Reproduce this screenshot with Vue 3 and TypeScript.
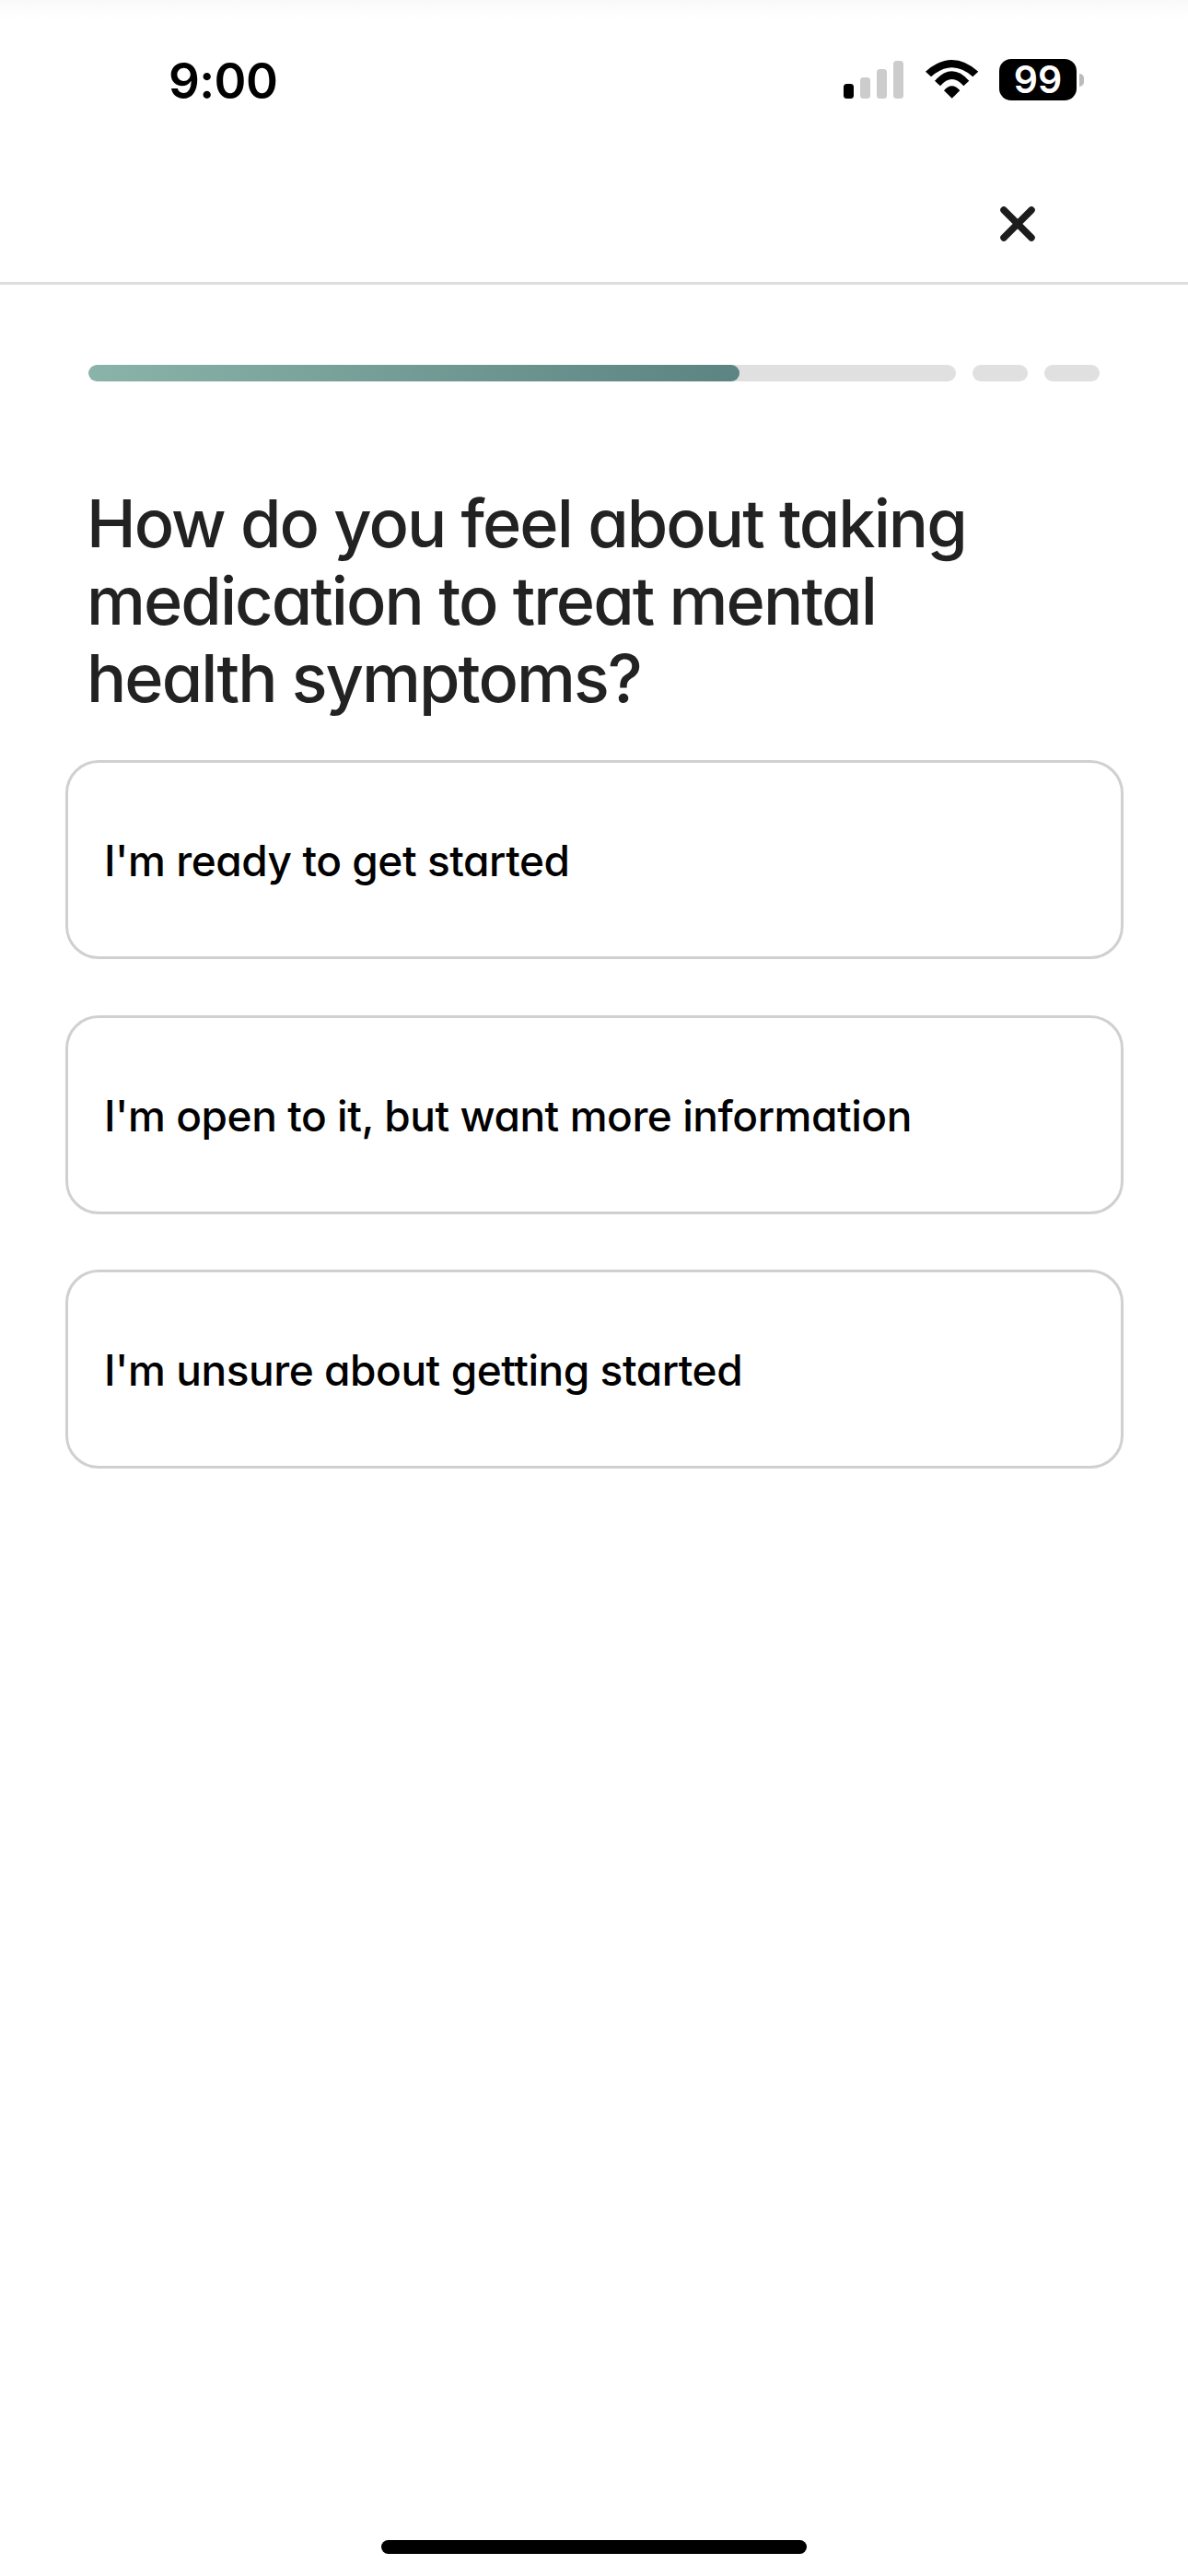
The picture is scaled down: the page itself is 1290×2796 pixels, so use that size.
<script setup lang="ts">
interface Option { id: number; label: string }
const options: Option[] = [
  { id: 1, label: "I'm ready to get started" },
  { id: 2, label: "I'm open to it, but want more information" },
  { id: 3, label: "I'm unsure about getting started" },
]
</script>

<template>
  <div class="screen">
    <div class="status">
      <span class="time">9:00</span>
      <div class="status-icons">
        <svg class="signal" width="66" height="42" viewBox="0 0 66 42">
          <rect x="0" y="25" width="11" height="16" rx="3.5" fill="#000" />
          <rect x="18" y="18" width="11" height="23" rx="3.5" fill="#ccc" />
          <rect x="36" y="9" width="11" height="32" rx="3.5" fill="#ccc" />
          <rect x="54" y="0" width="11" height="41" rx="3.5" fill="#ccc" />
        </svg>
        <svg class="wifi" width="58" height="42" viewBox="0 0 58 42">
          <path d="M0 12.7 Q28.7 -12.7 57.3 12.7 L51.3 18.3 Q28.7 -1.7 6 18.3 Z" fill="#000" />
          <path d="M10 22.7 Q28.7 1.9 47.3 22.7 L41.3 28.3 Q28.7 13.7 16 28.3 Z" fill="#000" />
          <path d="M20 33.3 Q28.7 23.3 37.3 33.3 L28.7 41.7 Z" fill="#000" />
        </svg>
        <div class="battery">
          <span class="battery-body">99</span>
          <span class="battery-cap"></span>
        </div>
      </div>
    </div>

    <header class="nav">
      <svg class="close" width="38" height="38" viewBox="0 0 38 38">
        <path d="M4 4 L34 34 M34 4 L4 34" stroke="#1c1c1c" stroke-width="7.5" stroke-linecap="round" />
      </svg>
    </header>

    <main class="content">
      <div class="progress">
        <div class="segment segment-main"><div class="fill"></div></div>
        <div class="segment segment-small"></div>
        <div class="segment segment-small"></div>
      </div>
      <h1 class="title">How do you feel about taking medication to treat mental health symptoms?</h1>
      <div class="options">
        <button v-for="o in options" :key="o.id" class="option" type="button">{{ o.label }}</button>
      </div>
    </main>

    <div class="home-indicator"></div>
  </div>
</template>

<style>
html, body { margin: 0; background: #fff; }
</style>

<style scoped>
.screen {
  width: 1290px;
  height: 2796px;
  background: #fff;
  position: relative;
  overflow: hidden;
  font-family: "Inter", "Liberation Sans", sans-serif;
  font-feature-settings: "cv11" 1;
  box-sizing: border-box;
}
.status {
  height: 132px;
  display: flex;
  justify-content: space-between;
  padding: 64px 113px 0 183px;
  box-sizing: border-box;
  background: linear-gradient(#f9f9f9, #fff 20px);
}
.time {
  font-size: 53px;
  font-weight: 600;
  letter-spacing: -0.6px;
  line-height: 48px;
  color: #000;
  font-feature-settings: normal;
}
.status-icons { display: flex; align-items: flex-start; gap: 23px; height: 45px; }
.signal { margin-top: 2px; }
.wifi { margin-top: 1px; }
.battery { display: flex; align-items: center; gap: 3px; margin-left: -1px; }
.battery-body {
  width: 84px;
  height: 45px;
  background: #000;
  border-radius: 13px;
  color: #fff;
  font-size: 41px;
  font-weight: 600;
  line-height: 45px;
  text-align: center;
  font-feature-settings: normal;
}
.battery-cap {
  width: 5px;
  height: 14px;
  background: #bbb;
  border-radius: 0 7px 7px 0;
}
.nav {
  height: 177px;
  box-sizing: border-box;
  border-bottom: 3px solid #ddd;
  display: flex;
  justify-content: flex-end;
  padding: 92px 166px 0 0;
}
.close { display: block; }
.content { padding: 87px 0 0 0; }
.progress { display: flex; gap: 18px; margin: 0 96px; height: 18px; }
.segment { background: #e0e0e0; border-radius: 9px; height: 18px; overflow: hidden; }
.segment-main { flex: 1; }
.segment-small { width: 60px; }
.fill {
  width: 707px;
  height: 18px;
  border-radius: 9px;
  background: linear-gradient(90deg, #8ab3a9, #5b8482);
}
.title {
  margin: 112px 96px 0 94px;
  font-size: 72px;
  font-weight: 500;
  letter-spacing: -1.95px;
  line-height: 84px;
  color: #222;
  width: 1000px;
}
.options {
  margin: 47px 70px 0 71px;
  display: flex;
  flex-direction: column;
  gap: 60.5px;
}
.option {
  height: 216px;
  box-sizing: border-box;
  border: 3px solid #d0d0d0;
  border-radius: 36px;
  background: #fff;
  text-align: left;
  padding: 2px 0 0 39px;
  font-family: inherit;
  font-feature-settings: inherit;
  font-size: 46px;
  font-weight: 450;
  letter-spacing: -0.45px;
  color: #000;
}
.home-indicator {
  position: absolute;
  left: 414px;
  top: 2757px;
  width: 462px;
  height: 15px;
  border-radius: 8px;
  background: #000;
}
</style>
